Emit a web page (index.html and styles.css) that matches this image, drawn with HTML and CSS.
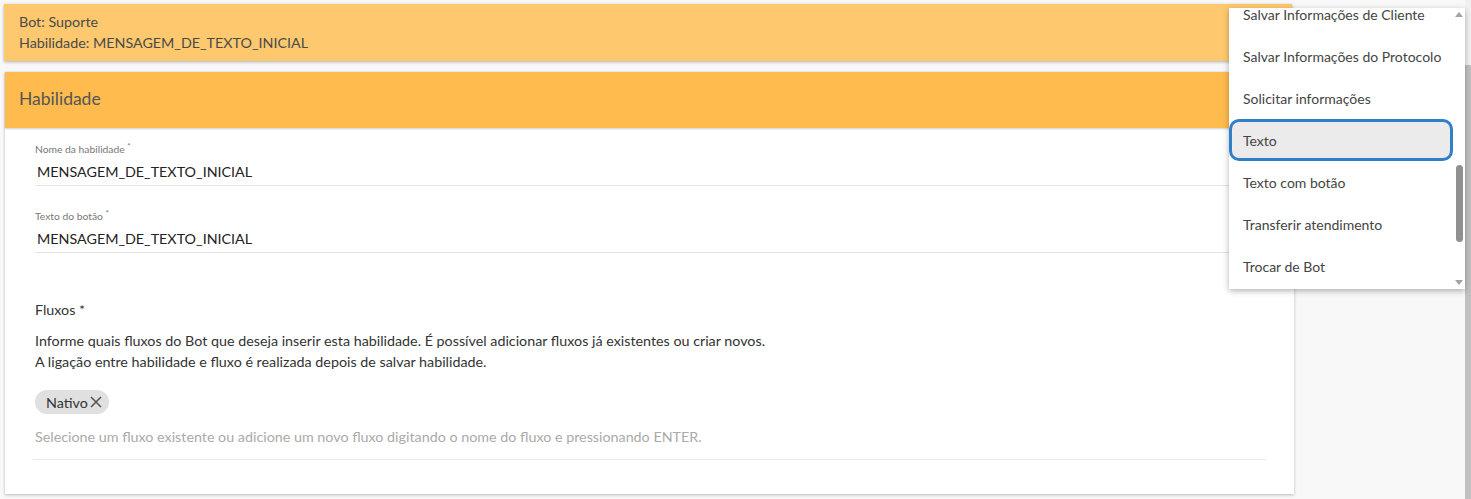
FILE: index.html
```html
<!DOCTYPE html>
<html lang="pt-BR">
  <head>
    <meta charset="UTF-8" />
    <meta name="viewport" content="width=device-width, initial-scale=1.0" />
    <title>Habilidade</title>
    <link rel="stylesheet" href="styles.css">
  </head>
  <body>
    <div class="page">
      <div class="content">
        <div class="infoBar">
          <div>Bot: Suporte</div>
          <div>Habilidade: MENSAGEM_DE_TEXTO_INICIAL</div>
        </div>

        <div class="card">
          <div class="cardHeader">Habilidade</div>
          <div class="cardBody">
            <div class="field">
              <label class="fieldLabel">Nome da habilidade <sup>*</sup></label>
              <div class="fieldValue">MENSAGEM_DE_TEXTO_INICIAL</div>
            </div>
            <div class="field second">
              <label class="fieldLabel">Texto do botão <sup>*</sup></label>
              <div class="fieldValue">MENSAGEM_DE_TEXTO_INICIAL</div>
            </div>

            <div class="flows">
              <div class="flowsTitle">Fluxos *</div>
              <p class="flowsText">
                Informe quais fluxos do Bot que deseja inserir esta habilidade. É possível adicionar fluxos já existentes ou criar novos.<br>
                A ligação entre habilidade e fluxo é realizada depois de salvar habilidade.
              </p>
              <span class="chip">Nativo
                <svg width="14" height="14" viewBox="0 0 14 14"><path d="M2 2 L12 12 M12 2 L2 12" stroke="#555" stroke-width="1.6" fill="none"/></svg>
              </span>
              <div class="flowInput">Selecione um fluxo existente ou adicione um novo fluxo digitando o nome do fluxo e pressionando ENTER.</div>
            </div>
          </div>
        </div>
      </div>
      <div class="pageScroll"><div class="pageThumb"></div></div>
    </div>

    <!-- menu de tipos aberto -->
    <div class="menu">
      <ul class="menuList">
        <li class="menuItem">Salvar Informações de Cliente</li>
        <li class="menuItem">Salvar Informações do Protocolo</li>
        <li class="menuItem">Solicitar informações</li>
        <li class="menuItem selected">Texto</li>
        <li class="menuItem">Texto com botão</li>
        <li class="menuItem">Transferir atendimento</li>
        <li class="menuItem">Trocar de Bot</li>
      </ul>
      <div class="menuScroll">
        <span class="arrow up"></span>
        <div class="menuThumb"></div>
        <span class="arrow down"></span>
      </div>
    </div>
  </body>
</html>
```

FILE: styles.css
```css
* {
  padding: 0;
  margin: 0;
  list-style: none;
  box-sizing: border-box;
}
body {
  background-color: #f8f8f8;
  font-family: Lato, "Liberation Sans", sans-serif;
  font-size: 14.3px;
  color: #333;
  height: 499px;
  overflow: hidden;
}
.page {
  display: flex;
  height: 499px;
}
.content {
  flex: 1;
  padding: 4px 0 0 4px;
}
.pageScroll {
  width: 6px;
  background-color: #f1f1f1;
  padding-top: 65px;
}
.pageThumb {
  height: 100%;
  background-color: #c1c1c1;
}
.infoBar {
  width: 1288px;
  height: 57px;
  padding: 7px 15px;
  background-color: #fec86e;
  color: #4a4a4a;
  line-height: 21px;
  box-shadow: 0 1px 3px rgba(0, 0, 0, 0.3);
}
.card {
  width: 1289px;
  margin: 11px 0 0 1px;
  background-color: #fff;
  box-shadow: 0 1px 3px rgba(0, 0, 0, 0.25);
}
.cardHeader {
  height: 56px;
  padding: 0 0 3px 14px;
  display: flex;
  align-items: center;
  background-color: #ffbb4e;
  color: #555;
  font-size: 17.5px;
  box-shadow: 0 1px 2px rgba(0, 0, 0, 0.2);
}
.cardBody {
  padding: 14px 27px 34px 30px;
}
.fieldLabel {
  display: block;
  font-size: 10.3px;
  line-height: 14px;
  height: 14px;
  color: #777;
}
.fieldLabel sup {
  font-size: 8px;
  line-height: 0;
  vertical-align: 4px;
}
.fieldValue {
  margin-top: 6px;
  line-height: 20px;
  padding: 0 2px 3px;
  border-bottom: 1px solid #e4e4e4;
  color: #222;
}
.field.second {
  margin-top: 23px;
}
.flows {
  margin-top: 47px;
}
.flowsTitle {
  line-height: 20px;
}
.flowsText {
  margin-top: 10px;
  line-height: 21px;
}
.chip {
  display: inline-flex;
  align-items: center;
  gap: 1px;
  height: 24px;
  margin-top: 18px;
  padding: 0 6px 0 11px;
  border-radius: 12px;
  background-color: #e0e0e0;
  color: #333;
  vertical-align: top;
}
.flowInput {
  margin-top: 13px;
  line-height: 20px;
  padding-bottom: 12px;
  border-bottom: 1px solid #ebebeb;
  color: #aaa;
  margin-left: -2px;
  padding-left: 2px;
}
.menu {
  position: absolute;
  top: 8px;
  left: 1229px;
  width: 236px;
  height: 281px;
  display: flex;
  font-size: 14px;
  background-color: #fff;
  box-shadow: 0 2px 6px rgba(0, 0, 0, 0.3);
}
.menuList {
  flex: 1;
  overflow: hidden;
  padding-left: 3px;
  margin-left: -3px;
}
.menuItem {
  height: 42px;
  display: flex;
  align-items: center;
  padding-left: 14px;
  color: #444;
  background-color: #fff;
}
.menuItem:first-child {
  margin-top: -15px;
}
.menuItem.selected {
  background-color: #ebebeb;
  border: 3px solid #2f80c8;
  border-radius: 10px;
  padding-left: 11px;
  position: relative;
}
.menuScroll {
  width: 12px;
  display: flex;
  flex-direction: column;
  align-items: center;
  padding: 4px 0;
}
.arrow {
  width: 0;
  height: 0;
  border-left: 4px solid transparent;
  border-right: 4px solid transparent;
}
.arrow.up {
  border-bottom: 5px solid #a3a3a3;
}
.arrow.down {
  border-top: 5px solid #a3a3a3;
  margin-top: auto;
}
.menuThumb {
  width: 7px;
  height: 77px;
  margin-top: 148px;
  border-radius: 4px;
  background-color: #909090;
}
```
